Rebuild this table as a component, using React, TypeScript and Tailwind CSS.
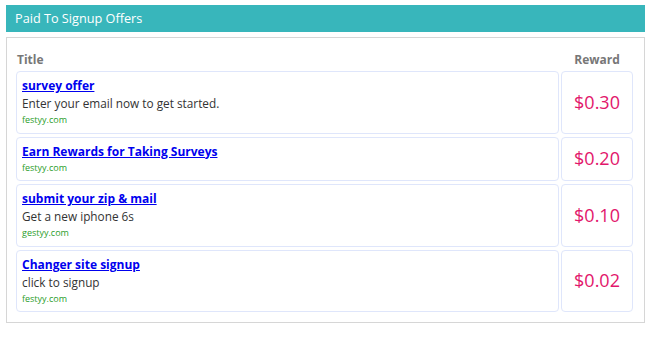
const offers = [
  { title: "survey offer", desc: "Enter your email now to get started.", site: "festyy.com", reward: "$0.30" },
  { title: "Earn Rewards for Taking Surveys", desc: "", site: "festyy.com", reward: "$0.20" },
  { title: "submit your zip & mail", desc: "Get a new iphone 6s", site: "gestyy.com", reward: "$0.10" },
  { title: "Changer site signup", desc: "click to signup", site: "festyy.com", reward: "$0.02" },
];

export default function App() {
  return (
    <div className="min-h-screen bg-white pt-[5px] pl-[6px] font-['Open_Sans',sans-serif]">
      <div className="w-[639px]">
        <div className="flex h-[27px] items-center bg-[#38b6bb] px-[9px] text-[12.7px] text-white">
          Paid To Signup Offers
        </div>
        <div className="mt-[5px] border border-[#d6d6d6] pt-[13px] pb-[10px] pl-[9px] pr-[11px]">
          <div className="mb-[2px] flex h-[18px] items-center gap-[2px] text-[12px] font-bold text-[#777]">
            <div className="flex-1 pl-[1px]">Title</div>
            <div className="w-[72px] text-center">Reward</div>
          </div>
          <div className="flex flex-col gap-[3px]">
            {offers.map((o) => (
              <div key={o.title} className="flex gap-[2px]">
                <div className="flex-1 rounded-[4px] border border-[#dfe6fb] px-[5px] pt-[5px] pb-[5.5px]">
                  <a href="#" className="block text-[12px] font-bold leading-[17px] text-[#0000ee] underline">
                    {o.title}
                  </a>
                  {o.desc && <p className="text-[11.8px] leading-[18px] text-[#333]">{o.desc}</p>}
                  <p className="text-[9px] leading-[15px] text-[#2a9d2a]">{o.site}</p>
                </div>
                <div className="flex w-[72px] items-center justify-center rounded-[4px] border border-[#dfe6fb] text-[18px] text-[#e2166b]">
                  {o.reward}
                </div>
              </div>
            ))}
          </div>
        </div>
      </div>
    </div>
  );
}
